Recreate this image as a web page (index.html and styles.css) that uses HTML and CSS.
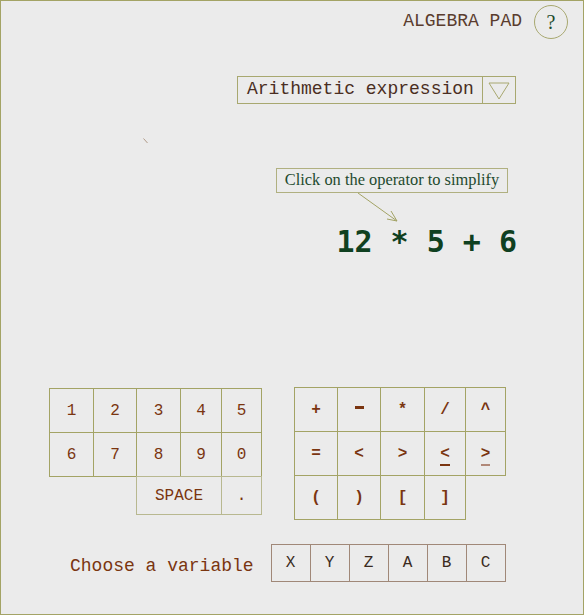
FILE: index.html
```html
<!DOCTYPE html>
<html>
<head>
<meta charset="utf-8">
<link rel="stylesheet" href="styles.css">
</head>
<body>
<div class="app">
  <div class="header">
    <span class="title">ALGEBRA PAD</span>
    <span class="help">?</span>
  </div>
  <div class="select-row">
    <div class="select">
      <span class="select-text">Arithmetic expression</span>
      <span class="select-arrow">
        <svg width="22" height="18" viewBox="0 0 22 18"><path d="M1 1 L21 1 L11 17 Z" fill="none" stroke="#a8a870" stroke-width="1"/></svg>
      </span>
    </div>
  </div>
  <div class="mark-row">
    <svg width="6" height="6" viewBox="0 0 6 6"><path d="M0.5 0.5 L4.5 5" stroke="#b09a88" stroke-width="1"/></svg>
  </div>
  <div class="tip-row">
    <div class="tip">Click on the operator to simplify
      <svg class="tip-arrow" width="44" height="32" viewBox="0 0 44 32"><path d="M1 1 L40 29 M34 19 L40 29 L30 27" fill="none" stroke="#a3a365" stroke-width="1"/></svg>
    </div>
  </div>
  <div class="expr-row">
    <span class="expr">12 * 5 + 6</span>
  </div>
  <div class="pads">
    <div class="pad digits">
      <div class="key">1</div><div class="key">2</div><div class="key">3</div><div class="key">4</div><div class="key">5</div>
      <div class="key">6</div><div class="key">7</div><div class="key">8</div><div class="key">9</div><div class="key">0</div>
      <div class="key space">SPACE</div><div class="key dot">.</div>
    </div>
    <div class="pad ops">
      <div class="key op">+</div><div class="key op"><span class="minus-bar"></span></div><div class="key op">*</div><div class="key op">/</div><div class="key op">^</div>
      <div class="key op">=</div><div class="key op">&lt;</div><div class="key op">&gt;</div><div class="key op"><span class="und">&lt;</span></div><div class="key op"><span class="und light">&gt;</span></div>
      <div class="key op">(</div><div class="key op">)</div><div class="key op">[</div><div class="key op">]</div>
    </div>
  </div>
  <div class="var-row">
    <span class="var-label">Choose a variable</span>
    <div class="vars">
      <div class="vkey">X</div><div class="vkey">Y</div><div class="vkey">Z</div><div class="vkey">A</div><div class="vkey">B</div><div class="vkey">C</div>
    </div>
  </div>
</div>
</body>
</html>
```

FILE: styles.css
```css
html, body {
  margin: 0;
  padding: 0;
  background: #ebebeb;
}
.app {
  box-sizing: border-box;
  width: 584px;
  height: 615px;
  border: 1px solid #a3a365;
  background: #ebebeb;
  font-family: "Liberation Mono", monospace;
}
.header {
  display: flex;
  justify-content: flex-end;
  align-items: center;
  padding: 4px 15px 0 0;
}
.title {
  font-size: 18px;
  color: #5a3c2e;
  margin-right: 12px;
  line-height: 20px;
  margin-top: -2px;
}
.help {
  box-sizing: border-box;
  width: 34px;
  height: 34px;
  border: 1px solid #a8a870;
  border-radius: 50%;
  display: flex;
  align-items: center;
  justify-content: center;
  font-family: "Liberation Serif", serif;
  font-size: 20px;
  color: #1a4a2a;
}
.select-row {
  display: flex;
  justify-content: flex-end;
  padding-right: 67px;
  margin-top: 37px;
}
.select {
  box-sizing: border-box;
  display: flex;
  height: 28px;
  width: 279px;
  border: 1px solid #a8a870;
}
.select-text {
  flex: 1;
  font-size: 18px;
  color: #4a2e22;
  line-height: 24px;
  padding-left: 9px;
}
.select-arrow {
  width: 33px;
  border-left: 1px solid #a8a870;
  display: flex;
  align-items: center;
  justify-content: center;
  padding-top: 2px;
  box-sizing: border-box;
}
.mark-row {
  margin-top: 34px;
  padding-left: 142px;
  height: 6px;
  line-height: 0;
}
.tip-row {
  display: flex;
  justify-content: flex-end;
  padding-right: 75px;
  margin-top: 24px;
}
.tip {
  position: relative;
  box-sizing: border-box;
  height: 25px;
  width: 232px;
  border: 1px solid #b0b080;
  font-family: "Liberation Serif", serif;
  font-size: 16.4px;
  color: #1e4a2e;
  line-height: 22px;
  text-align: center;
  white-space: nowrap;
}
.tip-arrow {
  position: absolute;
  left: 80px;
  top: 23px;
}
.expr-row {
  display: flex;
  justify-content: flex-end;
  padding-right: 66px;
  margin-top: 34px;
}
.expr {
  font-family: "DejaVu Sans Mono", monospace;
  font-weight: bold;
  font-size: 30px;
  line-height: 30px;
  color: #0f4020;
  white-space: pre;
}
.pads {
  display: flex;
  align-items: flex-start;
  padding-left: 48px;
  margin-top: 130px;
  gap: 33px;
}
.pad {
  display: grid;
}
.digits {
  margin-top: 1px;
  grid-template-columns: 44px 43px 44px 41px 40px;
  grid-template-rows: 44px 44px 38px;
}
.ops {
  grid-template-columns: 43px 43px 44px 41px 40px;
  grid-template-rows: 44px 44px 44px;
}
.key {
  box-sizing: border-box;
  border: 1px solid #a3a365;
  margin: 0 -1px -1px 0;
  display: flex;
  align-items: center;
  justify-content: center;
  font-size: 16px;
  color: #7a3510;
}
.space {
  grid-column: 3 / 5;
  border-color: #b8b890;
}
.dot {
  grid-column: 5 / 6;
  border-color: #b8b890;
}
.op {
  font-weight: bold;
  font-size: 16px;
}
.minus-bar {
  display: block;
  width: 9px;
  height: 3px;
  background: #7a3510;
  margin-top: -4px;
}
.und {
  display: inline-block;
  line-height: 16px;
  border-bottom: 2px solid #7a3510;
  padding-bottom: 2px;
  margin-top: 4px;
}
.und.light {
  border-bottom-color: #b08878;
}
.var-row {
  display: flex;
  align-items: center;
  padding-left: 69px;
  margin-top: 25px;
}
.var-label {
  font-size: 18px;
  color: #7a3510;
  margin-right: 17px;
  margin-top: 5px;
}
.vars {
  display: grid;
  grid-template-columns: repeat(6, 39px);
  grid-template-rows: 38px;
}
.vkey {
  box-sizing: border-box;
  border: 1px solid #a08878;
  margin-right: -1px;
  display: flex;
  align-items: center;
  justify-content: center;
  font-size: 16px;
  color: #3a2a20;
}
```
